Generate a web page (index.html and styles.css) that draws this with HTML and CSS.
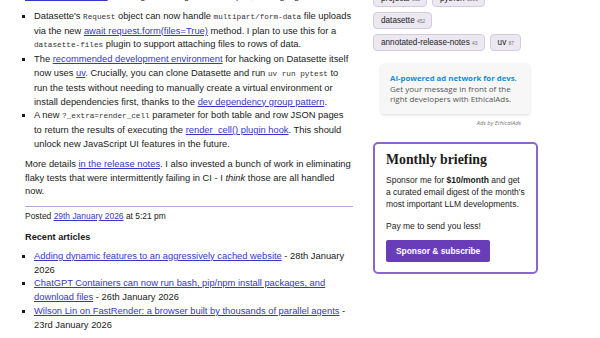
FILE: index.html
```html
<!DOCTYPE html>
<html lang="en">
<head>
    <meta charset="UTF-8">
    <meta name="viewport" content="width=device-width, initial-scale=1.0">
    <title>Datasette 1.0a24</title>
    <link rel="stylesheet" href="styles.css">
</head>
<body>
    <div class="pagina">
        <div class="conteudo">
            <p class="corte"><a href="#">the annotated notes</a> covering the changes in this alpha, the highlights are:</p>
            <ul class="lista">
                <li>Datasette's <code>Request</code> object can now handle <code>multipart/form-data</code> file uploads via the new <a href="#">await request.form(files=True)</a> method. I plan to use this for a <code>datasette-files</code> plugin to support attaching files to rows of data.</li>
                <li>The <a href="#">recommended development environment</a> for hacking on Datasette itself now uses <a href="#">uv</a>. Crucially, you can clone Datasette and run <code>uv run pytest</code> to run the tests without needing to manually create a virtual environment or install dependencies first, thanks to the <a href="#">dev dependency group pattern</a>.</li>
                <li>A new <code>?_extra=render_cell</code> parameter for both table and row JSON pages to return the results of executing the <a href="#">render_cell() plugin hook</a>. This should unlock new JavaScript UI features in the future.</li>
            </ul>
            <p>More details <a href="#">in the release notes</a>. I also invested a bunch of work in eliminating flaky tests that were intermittently failing in CI - I <em>think</em> those are all handled now.</p>
            <hr class="divisor">
            <p class="postado">Posted <a href="#">29th January 2026</a> at 5:21 pm</p>
            <h3 class="recentes">Recent articles</h3>
            <ul class="lista">
                <li><a href="#">Adding dynamic features to an aggressively cached website</a> - 28th January 2026</li>
                <li><a href="#">ChatGPT Containers can now run bash, pip/npm install packages, and download files</a> - 26th January 2026</li>
                <li><a href="#">Wilson Lin on FastRender: a browser built by thousands of parallel agents</a> - 23rd January 2026</li>
            </ul>
        </div>

        <div class="lateral">
            <div class="tags">
                <a class="tag" href="#">projects <span class="conta">511</span></a>
                <a class="tag" href="#">python <span class="conta">1203</span></a>
                <a class="tag" href="#">datasette <span class="conta">452</span></a>
                <a class="tag" href="#">annotated-release-notes <span class="conta">43</span></a>
                <a class="tag" href="#">uv <span class="conta">87</span></a>
            </div>

            <div class="anuncio">
                <div class="anuncioCaixa">
                    <strong class="anuncioTitulo">AI-powered ad network for devs.</strong>
                    Get your message in front of the right developers with EthicalAds.
                </div>
                <div class="anuncioRodape">Ads by EthicalAds</div>
            </div>

            <div class="briefing">
                <h2 class="briefingTitulo">Monthly briefing</h2>
                <p>Sponsor me for <strong>$10/month</strong> and get a curated email digest of the month's most important LLM developments.</p>
                <p class="pagar">Pay me to send you less!</p>
                <a class="btnSponsor" href="#">Sponsor &amp; subscribe</a>
            </div>
        </div>
    </div>
</body>
</html>
```

FILE: styles.css
```css
* {
    padding: 0px;
    margin: 0px;
    box-sizing: border-box;
}

body {
    font-family: "Liberation Sans", Arial, sans-serif;
    font-size: 9.35px;
    line-height: 13.8px;
    color: #1a1a1a;
    background-color: #fff;
}

a {
    color: #3636c9;
}

.pagina {
    display: flex;
    gap: 20px;
    margin-top: -10px;
    padding-left: 25px;
}

/* Coluna principal */

.conteudo {
    width: 328px;
    flex-shrink: 0;
}

.conteudo p {
    margin-bottom: 6px;
}

.conteudo .corte {
    white-space: nowrap;
    overflow: hidden;
}

.lista {
    list-style: square;
    padding-left: 9px;
    margin-bottom: 6px;
}

code {
    font-family: "Liberation Mono", "Courier New", monospace;
    font-size: 7.7px;
    color: #333;
}

.divisor {
    border: none;
    border-top: 1px solid #b9a2d8;
    margin: 7px 0px 3px 0px;
}

.conteudo .postado {
    font-size: 8.45px;
    margin-bottom: 7px;
}

.recentes {
    font-size: 9.2px;
    line-height: 13.8px;
    margin-bottom: 5px;
}

/* Coluna lateral */

.lateral {
    width: 165px;
    flex-shrink: 0;
}

.tags {
    display: flex;
    flex-wrap: wrap;
    gap: 5px;
}

.tag {
    display: inline-block;
    height: 17px;
    line-height: 15px;
    padding: 0px 6px 0px 7px;
    font-size: 8.2px;
    color: #222;
    text-decoration: none;
    background-color: #ece8f1;
    border: 1px solid #d4cbe0;
    border-radius: 4px;
}

.conta {
    font-size: 5px;
    color: #777;
}

.anuncio {
    margin: 13px 8px 0px 8px;
}

.anuncioCaixa {
    background-color: #f7f7f7;
    box-shadow: 0px 1px 3px rgba(0, 0, 0, 0.15);
    border-radius: 3px;
    padding: 9px 9px;
    font-family: "Open Sans", "DejaVu Sans", sans-serif;
    font-size: 8px;
    line-height: 10.5px;
    color: #555;
}

.anuncioTitulo {
    display: block;
    color: #1b8ad3;
    font-size: 7.8px;
}

.anuncioRodape {
    text-align: right;
    font-family: "Open Sans", sans-serif;
    font-style: italic;
    font-size: 5.8px;
    line-height: 8px;
    color: #777;
    padding-right: 9px;
    margin-top: 5px;
}

.briefing {
    margin-top: 15px;
    border: 2px solid #8b66cc;
    border-radius: 5px;
    padding: 7px 11px 10.5px 11px;
    font-size: 8.5px;
    line-height: 12px;
}

.briefing p {
    margin-bottom: 10px;
}

.briefingTitulo {
    font-family: "Liberation Serif", Georgia, serif;
    font-size: 13.8px;
    line-height: 18px;
    margin-bottom: 5px;
}

.briefing .pagar {
    margin-bottom: 8px;
}

.btnSponsor {
    display: inline-block;
    background-color: #6a3db8;
    color: #fff;
    font-weight: bold;
    font-size: 8.4px;
    text-decoration: none;
    border-radius: 2px;
    padding: 5px 10px;
    line-height: 12px;
}
```
